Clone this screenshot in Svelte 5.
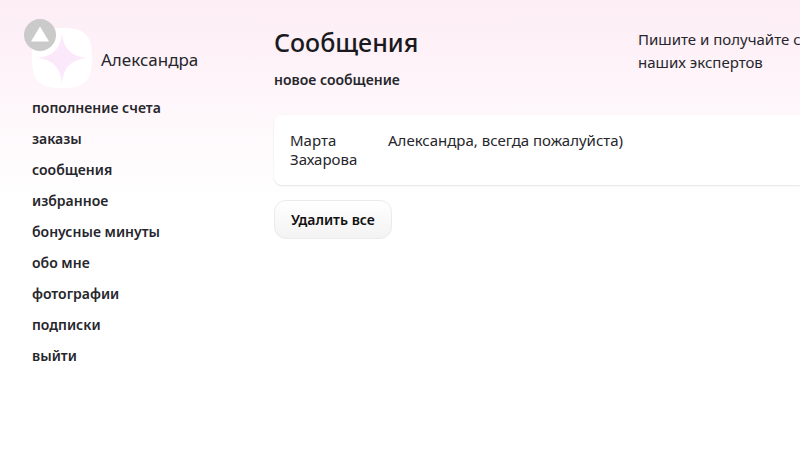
<script>
  const userName = 'Александра';

  const menu = [
    { title: 'пополнение счета', href: '#balance' },
    { title: 'заказы', href: '#orders' },
    { title: 'сообщения', href: '#messages' },
    { title: 'избранное', href: '#favorites' },
    { title: 'бонусные минуты', href: '#bonus' },
    { title: 'обо мне', href: '#about' },
    { title: 'фотографии', href: '#photos' },
    { title: 'подписки', href: '#subscriptions' },
    { title: 'выйти', href: '#logout' }
  ];

  let messages = $state([
    { id: 1, author: 'Марта Захарова', text: 'Александра, всегда пожалуйста)' }
  ]);

  function deleteAll() {
    messages = [];
  }

  function scrollTop() {
    window.scrollTo({ top: 0, behavior: 'smooth' });
  }
</script>

<button class="to-top" aria-label="Наверх" onclick={scrollTop}>
  <svg viewBox="0 0 32 32" aria-hidden="true">
    <path d="M16 7.500 L25 22.500 H7 Z" fill="#fff" />
  </svg>
</button>

<div class="page">
  <aside>
    <div class="profile">
      <svg class="avatar" viewBox="0 0 60 60" aria-hidden="true">
        <path d="M30 0 C53 0 60 7 60 30 C60 53 53 60 30 60 C7 60 0 53 0 30 C0 7 7 0 30 0 Z" fill="#fff" />
        <path d="M30 5 C31.500 21 39 28.500 56 30 C39 31.500 31.500 39 30 56 C28.500 39 21 31.500 4 30 C21 28.500 28.500 21 30 5 Z" fill="#fce8fb" />
      </svg>
      <span class="name">{userName}</span>
    </div>
    <nav>
      {#each menu as item}
        <a href={item.href}>{item.title}</a>
      {/each}
    </nav>
  </aside>

  <main>
    <header>
      <div class="heading">
        <h1>Сообщения</h1>
        <a href="#new">новое сообщение</a>
      </div>
      <p class="intro">Пишите и получайте сообщения от<br />наших экспертов</p>
    </header>

    {#each messages as message (message.id)}
      <article class="message">
        <div class="author">{message.author}</div>
        <div class="text">{message.text}</div>
      </article>
    {/each}

    <button class="delete" onclick={deleteAll}>Удалить все</button>
  </main>
</div>

<style>
  :global(body) {
    margin: 0;
    background: #fff linear-gradient(#fdedf5, #fff 200px) no-repeat;
    color: #26262c;
    font-family: "Noto Sans", sans-serif;
    font-size: 15px;
  }

  .page {
    display: grid;
    grid-template-columns: 210px minmax(0, 1fr);
    gap: 32px;
    padding: 28px 0 32px 32px;
    overflow: hidden;
  }

  .profile {
    display: flex;
    align-items: center;
    gap: 9px;
  }

  .avatar {
    width: 60px;
    height: 60px;
    flex: none;
  }

  .name {
    font-size: 17px;
    line-height: 24px;
    padding-top: 4px;
  }

  nav {
    display: flex;
    flex-direction: column;
    align-items: flex-start;
    gap: 9px;
    padding-top: 9px;
  }

  a {
    color: inherit;
    font-size: 14px;
    font-weight: 600;
    line-height: 22px;
    text-decoration: none;
  }

  a:hover {
    text-decoration: underline;
  }

  header {
    display: grid;
    grid-template-columns: 332px minmax(0, 1fr);
    gap: 32px;
    margin-bottom: 24px;
  }

  .heading {
    display: flex;
    flex-direction: column;
    align-items: flex-start;
    gap: 12px;
  }

  h1 {
    margin: 0;
    color: #1a1a1e;
    font-size: 25px;
    font-weight: 500;
    line-height: 29px;
  }

  .intro {
    margin: 0;
    line-height: 23px;
    white-space: nowrap;
  }

  .message {
    display: grid;
    grid-template-columns: 82px minmax(0, 1fr);
    gap: 16px;
    min-height: 38px;
    margin-bottom: 15px;
    padding: 16px;
    border-radius: 8px 0 0 8px;
    background: #fff;
    box-shadow: 0 1px 2px rgba(0, 0, 0, 0.1);
    line-height: 19px;
  }

  .delete {
    padding: 8px 16px;
    border: 1px solid #ebebed;
    border-radius: 12px;
    background: linear-gradient(#fff, #f3f3f4);
    color: #111;
    font: 600 14px/21px "Noto Sans", sans-serif;
    cursor: pointer;
  }

  /* floats over the corner of the avatar */
  .to-top {
    position: fixed;
    top: 19px;
    left: 24px;
    width: 32px;
    height: 32px;
    padding: 0;
    border: 0;
    border-radius: 50%;
    background: #cacaca;
    cursor: pointer;
  }

  .to-top svg {
    display: block;
    width: 100%;
  }
</style>
